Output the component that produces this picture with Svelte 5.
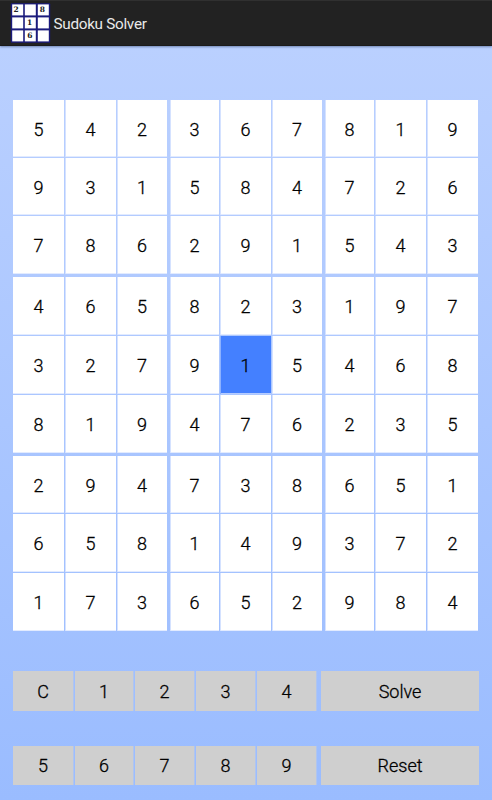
<script>
  const rows = [
    '542367819', '931584726', '786291543',
    '465823197', '327915468', '819476235',
    '294738651', '658149372', '173652984'
  ];
  const pads = [
    { keys: ['C', '1', '2', '3', '4'], action: 'Solve' },
    { keys: ['5', '6', '7', '8', '9'], action: 'Reset' }
  ];
  let selected = $state({ row: 4, col: 4 });
</script>

<div class="app">
  <header>
    <svg class="logo" width="40" height="40" viewBox="0 0 40 40">
      <rect x="-0.2" y="0.2" width="39.4" height="39.6" rx="1" fill="#1b1b7c" />
      <g fill="#fff">
        {#each [1.4, 14.4, 27.4] as y}
          {#each [1.2, 13.8, 26.8] as x}
            <rect {x} {y} width="11" height="11" />
          {/each}
        {/each}
      </g>
      <g class="mark">
        <text x="5.2" y="9.4">2</text>
        <text x="31.4" y="9.4">8</text>
        <text x="18.5" y="22.4">1</text>
        <text x="18.8" y="35.2">6</text>
      </g>
    </svg>
    <h1>Sudoku Solver</h1>
  </header>

  <main>
    <div class="board">
      {#each rows as row, r}
        {#each row as digit, c}
          <button
            class="cell"
            class:selected={selected.row === r && selected.col === c}
            onclick={() => (selected = { row: r, col: c })}>{digit}</button>
        {/each}
      {/each}
    </div>

    {#each pads as pad}
      <div class="pad">
        {#each pad.keys as key}
          <button class="key">{key}</button>
        {/each}
        <button class="key action">{pad.action}</button>
      </div>
    {/each}
  </main>
</div>

<style>
  :global(body) {
    margin: 0;
  }
  .app {
    box-sizing: border-box;
    width: 492px;
    height: 800px;
    overflow: hidden;
    background: linear-gradient(#bad0ff 46px, #9abcff 800px);
    font-family: Roboto, 'Liberation Sans', sans-serif;
    color: #000;
  }
  header {
    box-sizing: border-box;
    height: 46px;
    padding-left: 11px;
    display: flex;
    align-items: center;
    background: #222;
    border-top: 1px solid #303030;
    border-bottom: 1px solid #1b1b1b;
    box-shadow: 0 1px 2px #7187b4;
  }
  .logo {
    flex: none;
    overflow: visible;
  }
  .mark {
    font: bold 7.5px 'DejaVu Serif', serif;
    fill: #222;
    text-anchor: middle;
  }
  h1 {
    margin: 1px 0 0 2.5px;
    font-size: 15.3px;
    font-weight: 400;
    letter-spacing: -0.3px;
    line-height: 20px;
    color: #e9e9e9;
    white-space: nowrap;
  }
  main {
    padding: 54px 0 0 13px;
  }
  button {
    display: flex;
    align-items: center;
    justify-content: center;
    margin: 0;
    padding: 0;
    border: 0;
    border-radius: 0;
    font: inherit;
    font-size: 18px;
    font-weight: 300;
    -webkit-text-stroke: 0.3px #000;
    color: inherit;
  }
  .board {
    display: grid;
    width: 465px;
    grid-template-columns: 52px 52px 53px 50px 52px 53px 50px 52px 51px;
    grid-template-rows: 58px 58px 61px 59px 59px 61px 58px 59px 58px;
  }
  .cell {
    background: #fff;
    margin: 0 1px 1px 0;
    padding-top: 1px;
    box-shadow: inset 1px 0 #d5e2ff, inset 0 -1px #e2ebff;
  }
  .cell:nth-child(9n + 1) {
    box-shadow: inset 0 -1px #e2ebff;
  }
  .cell:nth-child(9n + 3),
  .cell:nth-child(9n + 6) {
    margin-right: 3px;
  }
  .cell:nth-child(9n) {
    margin-right: 0;
  }
  .cell:nth-child(n + 19):nth-child(-n + 27),
  .cell:nth-child(n + 46):nth-child(-n + 54) {
    margin-bottom: 3px;
  }
  .cell:nth-child(n + 73) {
    margin-bottom: 0;
  }
  .cell.selected {
    background: #4480ff;
    box-shadow: inset 1px 0 #8db2ff, inset 0 -1px #b5ccff;
  }
  .pad {
    display: grid;
    grid-template-columns: 60px 58px 59px 59px 59px 161px;
    column-gap: 2px;
    height: 40px;
    margin-top: 40px;
  }
  .pad + .pad {
    margin-top: 35px;
    height: 39px;
  }
  .key {
    background: #cfcfcf;
    box-shadow: 1px 0 #b0c5ef;
  }
  .action {
    margin-left: 3px;
    box-shadow: none;
  }
</style>
